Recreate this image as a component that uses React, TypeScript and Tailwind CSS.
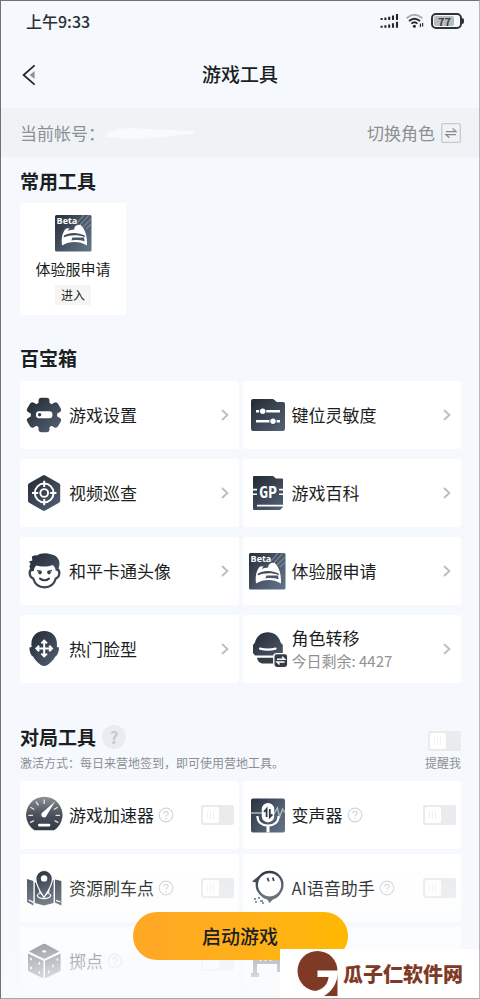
import type { ReactNode } from "react";

interface IconProps {
  children: ReactNode;
}

function Icon({ children }: IconProps) {
  return (
    <svg className="h-9 w-9 shrink-0 overflow-visible" viewBox="0 0 36 36" fill="none" aria-hidden="true">
      {children}
    </svg>
  );
}

/* Gradients shared by all the tool icons */
function IconDefs() {
  return (
    <svg className="absolute h-0 w-0" aria-hidden="true">
      <defs>
        <linearGradient id="ink" gradientUnits="userSpaceOnUse" x1="4" y1="4" x2="32" y2="34">
          <stop offset="0" stopColor="#262d37" />
          <stop offset="0.4" stopColor="#38414e" />
          <stop offset="1" stopColor="#526073" />
        </linearGradient>
        <linearGradient id="plate" gradientUnits="userSpaceOnUse" x1="0" y1="6" x2="36" y2="32">
          <stop offset="0" stopColor="#2b333e" />
          <stop offset="0.55" stopColor="#4b596b" />
          <stop offset="1" stopColor="#627286" />
        </linearGradient>
        <linearGradient id="dial" gradientUnits="userSpaceOnUse" x1="18" y1="0" x2="18" y2="34">
          <stop offset="0" stopColor="#8b9096" />
          <stop offset="0.5" stopColor="#4c535d" />
          <stop offset="1" stopColor="#2f3742" />
        </linearGradient>
        <mask id="gear">
          <g fill="#fff">
            <circle cx="18" cy="18" r="13.2" />
            <rect x="12.5" y="0.7" width="11" height="34.6" rx="3" />
            <rect x="12.5" y="0.2" width="11" height="35.6" rx="3" transform="rotate(60 18 18)" />
            <rect x="12.5" y="0.2" width="11" height="35.6" rx="3" transform="rotate(120 18 18)" />
          </g>
        </mask>
      </defs>
    </svg>
  );
}

function GearIcon() {
  return (
    <Icon>
      <rect width="36" height="36" fill="url(#ink)" mask="url(#gear)" />
      <rect x="10" y="14.2" width="16.4" height="7" rx="3" fill="#fff" />
      <circle cx="13.6" cy="17.7" r="1.7" fill="#353d49" />
    </Icon>
  );
}

function SlidersIcon() {
  return (
    <Icon>
      <path d="M4 2H24L28 5H34Q36 5 36 7V32Q36 34 34 34H4Q2 34 2 32V4Q2 2 4 2Z" fill="url(#ink)" />
      <path d="M7 14.3H31M7 24.3H31" stroke="#fff" strokeWidth="2.4" />
      <circle cx="13.7" cy="14.3" r="3.6" fill="#3a4350" />
      <circle cx="24" cy="24.3" r="3.6" fill="#3f4957" />
      <circle cx="13.7" cy="14.3" r="2.7" fill="#fff" />
      <circle cx="24" cy="24.3" r="2.7" fill="#fff" />
    </Icon>
  );
}

function TargetIcon() {
  return (
    <Icon>
      <path d="M16.8 0.4Q18 -0.2 19.2 0.4L33 8.3Q34.2 9 34.2 10.3V25.7Q34.2 27 33 27.7L19.2 35.6Q18 36.2 16.8 35.6L3.2 27.7Q2 27 2 25.7V10.3Q2 9 3.2 8.3Z" fill="url(#ink)" />
      <circle cx="18.2" cy="18" r="9.4" stroke="#fff" strokeWidth="2" />
      <circle cx="18.2" cy="18" r="3.9" stroke="#fff" strokeWidth="1.9" />
      <path d="M18.2 5.8V12M18.2 24V30.2M6 18H12.2M24.2 18H30.4" stroke="#fff" strokeWidth="2" />
    </Icon>
  );
}

function WikiIcon() {
  return (
    <Icon>
      <path d="M5 1H24L27 3.5H33Q34 3.5 34 4.5V32L31 35H5Q4 35 4 34V2Q4 1 5 1Z" fill="url(#ink)" />
      <path d="M3.5 14.6H8M3.5 19.2H8M30 14.6H34.5M30 19.2H34.5M8 30.6H34" stroke="#fff" strokeWidth="1.6" />
      <text x="19" y="22.6" textAnchor="middle" fill="#fff" className="font-['DejaVu_Sans_Mono',monospace] text-[15px] font-bold">
        GP
      </text>
    </Icon>
  );
}

function CartoonIcon() {
  return (
    <Icon>
      <path d="M6 16C2.5 17 3 24.5 7.2 25.5C9 31.5 13 34.4 18.5 34.4C24 34.4 28 31.5 29.8 25.5C34 24.5 34.5 17 31 16" fill="#fff" stroke="#3c4654" strokeWidth="2.3" />
      <path d="M5 18.5L3.4 13L4.6 11L3 8.6L6.4 7.4L5.8 3.6L9 2.2L11 2.4C14 0.4 20 -0.6 24.5 1.2C31 2 34.6 7 33.2 13L32 18.5L29.6 17.5C29.4 15 28.4 13.4 26.4 12C22 14 15 14 10.6 12.4C8.6 13.6 8 16 7.8 18Z" fill="url(#ink)" />
      <path d="M11 17.6L15.4 18.4M26 17.6L21.6 18.4" stroke="#353d49" strokeWidth="1.2" />
      <circle cx="14" cy="19.6" r="1.8" fill="#353d49" />
      <circle cx="23" cy="19.6" r="1.8" fill="#353d49" />
      <path d="M14 25.6Q18.5 29 23 25.6" stroke="#353d49" strokeWidth="2" strokeLinecap="round" />
    </Icon>
  );
}

function BetaIcon() {
  return (
    <Icon>
      <rect width="36.5" height="36.5" rx="1.5" fill="url(#plate)" />
      <path d="M22 8L29 0M25 10L34 0M28 12L36 4M31 14L36 9" stroke="#8f9dae" strokeOpacity="0.6" strokeWidth="1.2" />
      <path d="M7 30.4C6.2 24 7 17.4 11 13.4L14.6 13.2L12.6 16C14 15.6 17.4 14.6 19.2 14.6L19.6 12L22 10L25.4 9.8C30.4 14 32.4 22 32 30.4C24 25.8 15 25.8 7 30.4Z" fill="#fff" />
      <path d="M9 20.6C14 17.2 23 17 29.6 20.6L30 22.2C24 19.6 15 19.6 8.6 22.4Z" fill="#3e4957" />
      <path d="M17.4 22.4H29L29.6 26.2C25.4 24.8 21 24.8 16.4 25.4Z" fill="#4a5667" />
      <text x="1.6" y="9.2" fill="#fff" className="font-['Open_Sans',sans-serif] text-[9px] font-bold">
        Beta
      </text>
    </Icon>
  );
}

function FaceIcon() {
  return (
    <Icon>
      <path d="M18.2 0C26 0 31 5.4 31 13L30.8 16L33 16.4C33 20 31.6 24.4 29.4 25.4C27 29.4 22 35 18.2 35C14.4 35 9.4 29.4 7 25.4C4.8 24.4 3.4 20 3.4 16.4L5.6 16L5.4 13C5.4 5.4 10.4 0 18.2 0Z" fill="url(#ink)" />
      <path d="M18.2 10.4V24.6M11.2 17.5H25.2M15.4 12.4L18.2 9.6L21 12.4M15.4 22.6L18.2 25.4L21 22.6M13.2 14.7L10.4 17.5L13.2 20.3M23.2 14.7L26 17.5L23.2 20.3" stroke="#fff" strokeWidth="2" />
    </Icon>
  );
}

function TransferIcon() {
  return (
    <Icon>
      <path d="M6 11.6C7.4 5 12.6 1.2 18.8 1.2C25 1.2 30.2 5 31.6 11.6L33.8 14V22L31.8 24.6H6L4 22V14Z" fill="url(#ink)" />
      <path d="M11 17.6Q18.8 19.6 26.6 17.6" stroke="#fff" strokeWidth="2.2" strokeLinecap="round" />
      <path d="M8 26.8H26V32.4H13Q9 32 8 26.8Z" fill="#353d49" />
      <rect x="24.8" y="22.6" width="14" height="14" rx="3" fill="#353d49" stroke="#fff" strokeWidth="1.4" />
      <path d="M28 28.2H35.6L33 25.8M35.6 31H28L30.6 33.4" stroke="#fff" strokeWidth="1.4" />
    </Icon>
  );
}

function GaugeIcon() {
  return (
    <Icon>
      <path d="M8.4 33.2A18.2 18.2 0 1 1 28.2 33.2Z" fill="url(#dial)" />
      <path
        d="M2.4 18.3H7M29.6 18.3H34M4.4 10.2L8.4 12.6M10 4.6L12.4 8.4M18.2 2.6V7M28 12.4L31.6 10.2M4 25.6L8 23.6M28.6 23.6L32.4 25.6"
        stroke="#fff"
        strokeOpacity="0.85"
        strokeWidth="1.2"
      />
      <path d="M29 4.4L15.6 16.2Q14.4 20.2 18.2 20.4Q20.4 20 21.2 17.4Z" fill="#fff" />
      <rect x="12.2" y="26.8" width="12" height="2.8" rx="0.8" fill="#fff" />
    </Icon>
  );
}

function VoiceIcon() {
  return (
    <Icon>
      <rect x="2" y="1.4" width="34" height="34" rx="2" fill="url(#plate)" />
      <path d="M2 16H13M25 17L28.4 11L30.6 20L33.6 12L36 16" stroke="#aeb6c0" strokeWidth="1.4" />
      <rect x="12.8" y="6" width="12.4" height="19.4" rx="6.2" fill="#fff" />
      <path d="M8.4 19C8.6 25.4 13 28.6 19 28.6S29.4 25.4 29.6 19" stroke="#fff" strokeWidth="2.2" />
      <path d="M19 28.6V35.4" stroke="#fff" strokeWidth="3" />
      <path d="M17.6 20V12L15 15M20.8 12V20L23.4 17.4" stroke="#2f3742" strokeWidth="1.8" />
    </Icon>
  );
}

function MapIcon() {
  return (
    <Icon>
      <path d="M1 9L7.4 11V35.4L1 32ZM35.4 11L29 9.6V32.4L35.4 35.4Z" fill="#46505d" />
      <path d="M2.6 30L8 32.6M30 30.4L34.4 32" stroke="#fff" strokeWidth="1.2" />
      <path d="M8.8 12.6L13 13V22L18 27L23.4 22V12L27.6 10V33L18 35.6L8.8 33Z" fill="url(#ink)" />
      <ellipse cx="18" cy="25.6" rx="6.6" ry="3" stroke="#fff" strokeWidth="1.3" />
      <path d="M18 27.4C14 21.4 9.8 15.6 9.8 8.8A8.2 8.2 0 0 1 26.4 8.8C26.4 15.6 22 21.4 18 27.4Z" fill="url(#ink)" stroke="#fff" strokeWidth="1.2" />
      <circle cx="18.1" cy="8.4" r="3.2" fill="#fff" />
    </Icon>
  );
}

function BirdIcon() {
  return (
    <Icon>
      <circle cx="20.6" cy="14.8" r="12.8" fill="#fff" stroke="url(#ink)" strokeWidth="2.4" />
      <path d="M10.6 5.4L3 11.4L8 12.8Z" fill="#353d49" />
      <path d="M10 22.6C17 29.6 28 27.6 32.6 20C31.4 26 27 28.6 24 29.4L20.4 33L18.4 29.6C15 29 12 27 10 22.6Z" fill="#46505d" />
      <path d="M18.4 7.8L19.8 11.4M23.8 7.4L24.8 11" stroke="#353d49" strokeWidth="1.8" />
      <path d="M5 29H7M9 28H11M6 32H8M11 31H14M13 33H15" stroke="#46505d" strokeWidth="1.4" />
    </Icon>
  );
}

function DiceIcon() {
  return (
    <Icon>
      <path d="M17 1Q18.2 0.4 19.4 1L33.4 8.4L18.2 16L3 8.4ZM2 10.6L17.4 17.8V35.4L3 28.6Q2 28 2 27ZM34.6 10.6L19 17.8V35.4L33.6 28.6Q34.6 28 34.6 27Z" fill="url(#ink)" />
      <g fill="#fff">
        <ellipse cx="18.2" cy="8.4" rx="2.2" ry="1.2" />
        <ellipse cx="5" cy="16" rx="0.9" ry="1.4" />
        <ellipse cx="13.4" cy="20.4" rx="0.9" ry="1.4" />
        <ellipse cx="5" cy="25" rx="0.9" ry="1.4" />
        <ellipse cx="13.4" cy="29.6" rx="0.9" ry="1.4" />
        <ellipse cx="31.4" cy="16.6" rx="0.9" ry="1.4" />
        <ellipse cx="27" cy="23" rx="0.9" ry="1.4" />
        <ellipse cx="22.8" cy="29" rx="0.9" ry="1.4" />
      </g>
    </Icon>
  );
}

function BenchIcon() {
  return (
    <Icon>
      <path d="M4 10H34V21H4ZM4 10H8V34H4ZM28 10H34V29H28ZM2 30H10V34H2Z" fill="#4a5461" />
      <path d="M11.5 12V18M16.5 12V18M21.5 12V18" stroke="#fff" strokeWidth="1.6" />
    </Icon>
  );
}

interface Tool {
  name: string;
  icon: ReactNode;
  note?: string;
}

const toolbox: Tool[] = [
  { name: "游戏设置", icon: <GearIcon /> },
  { name: "键位灵敏度", icon: <SlidersIcon /> },
  { name: "视频巡查", icon: <TargetIcon /> },
  { name: "游戏百科", icon: <WikiIcon /> },
  { name: "和平卡通头像", icon: <CartoonIcon /> },
  { name: "体验服申请", icon: <BetaIcon /> },
  { name: "热门脸型", icon: <FaceIcon /> },
  { name: "角色转移", icon: <TransferIcon />, note: "今日剩余: 4427" },
];

const matchTools: Tool[] = [
  { name: "游戏加速器", icon: <GaugeIcon /> },
  { name: "变声器", icon: <VoiceIcon /> },
  { name: "资源刷车点", icon: <MapIcon /> },
  { name: "AI语音助手", icon: <BirdIcon /> },
  { name: "掷点", icon: <DiceIcon /> },
];

function Toggle({ id }: { id: string }) {
  return (
    <input
      id={id}
      type="checkbox"
      role="switch"
      className="flex h-5 w-[33px] shrink-0 appearance-none items-center rounded-xs bg-[#e9ebec] px-0.5 before:h-4 before:w-4 before:rounded-xs before:border-4 before:border-white before:bg-[repeating-linear-gradient(90deg,#f3f3f3_0_1px,#fff_1px_3px)] before:content-[''] checked:justify-end checked:bg-[#ffad1c]"
    />
  );
}

function HelpIcon() {
  return (
    <svg className="h-4 w-4" viewBox="0 0 16 16" fill="none" stroke="#d4d6d8" strokeWidth="1.2" aria-hidden="true">
      <circle cx="8" cy="8" r="6.8" />
      <path d="M5.8 6.4C5.8 3.6 10.2 3.6 10.2 6.4C10.2 8 8 7.8 8 9.8M8 11V12.4" />
    </svg>
  );
}

function StatusBar() {
  return (
    <div className="flex h-10 items-center justify-between pr-[15px] pl-[25px]">
      <span className="text-base font-medium text-[#2b2f33]">上午9:33</span>
      <div className="flex items-center gap-1.5">
        <svg className="h-4 w-5" viewBox="0 0 20 16" stroke="#24282c" strokeWidth="2.1" aria-hidden="true">
          <path d="M2.6 5V7M6.4 4.6V7M10.2 3.8V7M14 2.6V7M18 1V7M2.6 12.8V14.8M6.4 12.2V14.8M10.2 11.4V14.8M14 10.2V14.8M18 8.8V14.8" />
        </svg>
        <svg className="h-4 w-5" viewBox="0 0 20 16" fill="none" strokeWidth="1.9" aria-hidden="true">
          <path d="M1.6 5.2Q9.4 -1.6 17.4 5.2" stroke="#a9adb1" />
          <path d="M4 8Q9.4 3.4 15 8M6.4 10.6Q9.4 8 12.4 10.6" stroke="#24282c" />
          <circle cx="9.4" cy="13.2" r="1.5" fill="#24282c" />
          <path d="M15.4 10.4V14M17.6 10V13.6" stroke="#24282c" strokeWidth="1.2" />
        </svg>
        <div className="flex items-center">
          <span className="flex h-4 w-[31px] items-center rounded-[5px] border-2 border-[#2f3337] p-px">
            <span className="h-full w-5 rounded-xs bg-[#b9bcbf] pl-1 text-[11px] leading-[10px] font-bold text-[#3b3f43]">77</span>
          </span>
          <span className="h-1.5 w-0.5 rounded-r-xs bg-[#2f3337]" />
        </div>
      </div>
    </div>
  );
}

export default function App() {
  return (
    <div className="relative flex h-screen flex-col overflow-hidden border border-t-[#6f7275] border-r-[#b5b9bd] border-b-[#a5a8ab] border-l-[#6f7275] bg-[#f5f9fd] font-['Noto_Sans_CJK_SC',sans-serif] text-[#1b1e22]">
      <IconDefs />
      <StatusBar />

      <header className="grid h-[67px] grid-cols-[1fr_auto_1fr] items-center px-5">
        <button type="button" aria-label="返回" className="w-fit">
          <svg className="h-6 w-4" viewBox="0 0 16 24" fill="none" aria-hidden="true">
            <path d="M13.6 2.4L2.6 12L13.6 21.6" stroke="#25292d" strokeWidth="1.8" />
            <path d="M13.6 8V16L8.6 12Z" fill="#8d9195" />
          </svg>
        </button>
        <h1 className="text-[19px] font-medium">游戏工具</h1>
      </header>

      <div className="flex h-[49px] shrink-0 items-center justify-between bg-[#eff3f6] pr-[18px] pl-[19px] text-[17px] text-[#8c9093]">
        <div className="flex items-center">
          <span>当前帐号：</span>
          <svg className="h-4 w-24" viewBox="0 0 96 16" fill="#f8fbfd" aria-hidden="true">
            <path d="M0 12Q1 5 24 3L88 6Q92 8 84 9L50 13Q20 15 0 12Z" />
          </svg>
        </div>
        <button type="button" className="flex items-center gap-1.5">
          切换角色
          <svg className="h-5 w-5" viewBox="0 0 20 20" fill="none" stroke="#85898c" aria-hidden="true">
            <rect x="0.7" y="0.7" width="18.6" height="18.6" rx="1.6" stroke="#c6cacd" strokeWidth="1.3" />
            <path d="M5 8.6H15L11.6 5.4M15 11.6H5L8.4 14.8" strokeWidth="1.3" />
          </svg>
        </button>
      </div>

      <main className="min-h-0 flex-1 overflow-hidden pr-[18px] pl-[19px]">
        <section className="pt-2.5">
          <h2 className="text-[19px] leading-7 font-bold">常用工具</h2>
          <div className="mt-2 flex h-28 w-[106px] flex-col items-center rounded-xs bg-white pt-3">
            <BetaIcon />
            <span className="mt-1.5 text-[15px] leading-6">体验服申请</span>
            <button type="button" className="mt-1 h-5 bg-[#f5f5f6] px-1.5 text-xs leading-5">
              进入
            </button>
          </div>
        </section>

        <section className="pt-[29px]">
          <h2 className="text-[19px] leading-7 font-bold">百宝箱</h2>
          <div className="mt-[9px] grid grid-cols-2 gap-x-1 gap-y-2.5">
            {toolbox.map((tool) => (
              <a key={tool.name} href="#" className="flex h-[68px] items-center rounded-xs bg-white pr-2.5 pl-1.5">
                {tool.icon}
                <span className="ml-[7px] flex-1 text-[17px] leading-6">
                  {tool.name}
                  {tool.note && <span className="block text-[15px] leading-[22px] text-[#8f9295]">{tool.note}</span>}
                </span>
                <svg className="h-3 w-2" viewBox="0 0 8 12" fill="none" stroke="#bcbfc1" strokeWidth="1.9" aria-hidden="true">
                  <path d="M1 1L6.4 6L1 11" />
                </svg>
              </a>
            ))}
          </div>
        </section>

        <section className="pt-10">
          <div className="flex justify-between">
            <div>
              <h2 className="flex items-center gap-1.5 text-[19px] leading-7 font-bold">
                对局工具
                <button type="button" aria-label="帮助" className="h-6 w-6 rounded-full bg-[#e9edf0] text-[17px] leading-6 font-bold text-[#c6cacd]">
                  ?
                </button>
              </h2>
              <p className="text-xs leading-6 text-[#8c9093]">激活方式：每日来营地签到，即可使用营地工具。</p>
            </div>
            <div className="flex flex-col items-end pt-2">
              <Toggle id="remind" />
              <label htmlFor="remind" className="text-xs leading-6 text-[#8c9093]">
                提醒我
              </label>
            </div>
          </div>
          <div className="mt-1.5 grid grid-cols-2 gap-x-1 gap-y-[5px]">
            {matchTools.map((tool, i) => (
              <div key={tool.name} className="flex h-[68px] items-center rounded-xs bg-white pr-[5px] pl-1.5">
                {tool.icon}
                <label htmlFor={`match-${i}`} className="ml-[7px] text-[17px]">
                  {tool.name}
                </label>
                <span className="ml-1 flex-1">
                  <HelpIcon />
                </span>
                <Toggle id={`match-${i}`} />
              </div>
            ))}
            <div className="flex h-[68px] items-center rounded-xs bg-white pl-1.5">
              <BenchIcon />
            </div>
          </div>
        </section>
      </main>

      {/* Launch bar floats over the scrolled list */}
      <div className="pointer-events-none absolute inset-x-0 bottom-0 flex h-32 items-start justify-center bg-linear-to-b from-[#f8fafc]/0 to-[#f8fafc]/95 pt-[42px]">
        <button type="button" className="pointer-events-auto h-12 w-[215px] rounded-full bg-linear-to-r from-[#ffa726] to-[#ffb800] text-[19px] font-medium">
          启动游戏
        </button>
      </div>

      <div className="absolute -right-px -bottom-px flex h-[50px] w-[200px] items-center gap-1 bg-white pl-[17px] text-[#7f3a26]">
        <svg className="h-[46px] w-[42px]" viewBox="0 0 42 46" aria-hidden="true">
          <circle cx="20.5" cy="20" r="20" fill="#7f3a26" />
          <path d="M20.5 20H40.5V45H20.5Z" fill="#7f3a26" />
          <path d="M20.5 19.6H41V22Q39.5 38 26 45.6H16V40.4Q30 38.4 31.6 26H20.5Z" fill="#fff" />
        </svg>
        <span className="text-xl font-black whitespace-nowrap">瓜子仁软件网</span>
      </div>
    </div>
  );
}
